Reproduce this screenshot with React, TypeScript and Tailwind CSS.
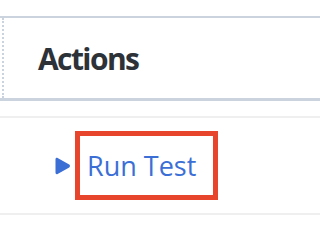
import React from "react";

function PlayIcon() {
  return (
    <svg width="17" height="18" viewBox="0 0 17 18" className="shrink-0">
      <path
        d="M1.5 2.2 C1.5 1 2.6 0.4 3.6 1 L15.2 7.6 C16.2 8.2 16.2 9.8 15.2 10.4 L3.6 17 C2.6 17.6 1.5 17 1.5 15.8 Z"
        fill="#3b6fd6"
      />
    </svg>
  );
}

export default function App() {
  return (
    <div
      className="w-full min-w-[278px] h-[230px] bg-white overflow-hidden"
      style={{ fontFamily: '"Open Sans", "Liberation Sans", sans-serif' }}
    >
      <div className="pt-[16px]">
        {/* header cell */}
        <div className="border-t-2 border-b-[3px] border-[#cbd3de]">
          <div className="ml-[2px] h-[80px] border-l-2 border-dotted border-[#cbd3de] flex items-center pl-[34px]">
            <span className="text-[30px] font-bold text-[#2d3239] leading-none tracking-[-1.6px] pt-[2px]">
              Actions
            </span>
          </div>
        </div>

        {/* body row */}
        <div className="mt-[15px] border-t-2 border-b-2 border-[#efefef]">
          <div className="h-[95px] flex items-center pl-[54px] gap-[4px]">
            <PlayIcon />
            <div className="w-[143px] h-[69px] border-[5px] border-[#e8462c] flex items-center pl-[7px]">
              <span className="text-[27px] text-[#3b6fd6] leading-none">Run Test</span>
            </div>
          </div>
        </div>
      </div>
    </div>
  );
}
